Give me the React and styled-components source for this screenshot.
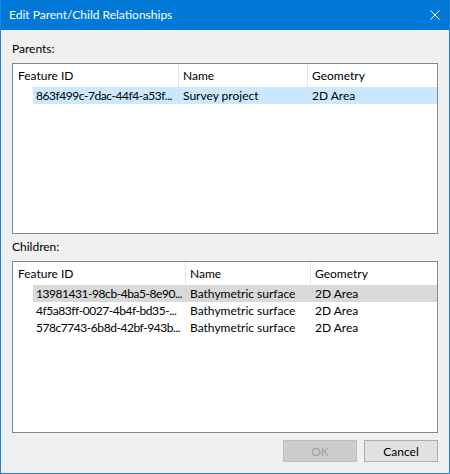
import React from 'react';
import styled, { createGlobalStyle } from 'styled-components';

const GlobalStyle = createGlobalStyle`
  body {
    margin: 0;
    font-family: 'Segoe UI', Lato, 'Noto Sans', sans-serif;
    font-size: 12px;
    color: #000;
  }
`;

const Window = styled.div`
  display: flex;
  flex-direction: column;
  width: 450px;
  height: 474px;
  box-sizing: border-box;
  border: 1px solid #1883d7;
  border-top: 0;
  background: #f0f0f0;
`;

const TitleBar = styled.div`
  display: flex;
  align-items: center;
  justify-content: space-between;
  height: 30px;
  padding-left: 8px;
  background: #0078d7;
  color: #fff;
  line-height: 16px;
`;

const CloseIcon = styled.svg`
  margin-right: 9px;
`;

const Body = styled.div`
  display: flex;
  flex-direction: column;
  padding: 11px;
`;

const Label = styled.div`
  line-height: 16px;
  margin: ${(props) => props.margin || '0'};
`;

const ListBox = styled.div`
  height: ${(props) => props.height}px;
  box-sizing: border-box;
  border: 1px solid #828790;
  background: #fff;
  overflow: hidden;
`;

const Header = styled.div`
  display: grid;
  grid-template-columns: ${(props) => props.cols};
  height: 23px;
  line-height: 23px;
`;

const HeaderCell = styled.div`
  padding-left: 4px;
  white-space: nowrap;
  overflow: hidden;
  border-right: 1px solid #e5e5e5;
  &:first-child {
    padding-left: 5px;
  }
  &:last-child {
    border-right: 0;
  }
`;

const Row = styled.div`
  display: grid;
  grid-template-columns: ${(props) => props.cols};
  margin-left: 20px;
  height: 17px;
  line-height: 17px;
  background: ${(props) =>
    props.selected === 'active' ? '#cce8ff' : props.selected === 'inactive' ? '#d9d9d9' : 'transparent'};
`;

const Cell = styled.div`
  padding-left: 4px;
  white-space: nowrap;
  overflow: hidden;
  text-overflow: clip;
`;

// feature IDs: Lato digits run wider than the dialog font, so tighten them a bit
const IdCell = styled(Cell)`
  padding-left: 3px;
  letter-spacing: -0.45px;
`;

const ButtonRow = styled.div`
  display: flex;
  justify-content: flex-end;
  gap: 7px;
  margin-top: 7px;
`;

const Button = styled.button`
  width: 74px;
  height: 22px;
  box-sizing: border-box;
  padding: 0;
  font-family: inherit;
  font-size: 12px;
  border: 1px solid ${(props) => (props.disabled ? '#bfbfbf' : '#adadad')};
  background: ${(props) => (props.disabled ? '#cccccc' : '#e1e1e1')};
  color: ${(props) => (props.disabled ? '#a0a0a0' : '#000')};
`;

const columns = ['Feature ID', 'Name', 'Geometry'];

const parents = [['863f499c-7dac-44f4-a53f...', 'Survey project', '2D Area']];

const children = [
  ['13981431-98cb-4ba5-8e90...', 'Bathymetric surface', '2D Area'],
  ['4f5a83ff-0027-4b4f-bd35-...', 'Bathymetric surface', '2D Area'],
  ['578c7743-6b8d-42bf-943b...', 'Bathymetric surface', '2D Area'],
];

const FeatureList = ({ height, headerCols, rowCols, rows, selected }) => (
  <ListBox height={height}>
    <Header cols={headerCols}>
      {columns.map((c) => (
        <HeaderCell key={c}>{c}</HeaderCell>
      ))}
    </Header>
    {rows.map(([id, name, geometry], i) => (
      <Row key={id} cols={rowCols} selected={i === 0 ? selected : null}>
        <IdCell>{id}</IdCell>
        <Cell>{name}</Cell>
        <Cell>{geometry}</Cell>
      </Row>
    ))}
  </ListBox>
);

const App = () => (
  <>
    <GlobalStyle />
    <Window>
      <TitleBar>
        <span>Edit Parent/Child Relationships</span>
        <CloseIcon width='10' height='10' viewBox='0 0 10 10'>
          <path d='M0.5 0.5 L9.5 9.5 M9.5 0.5 L0.5 9.5' stroke='#fff' strokeWidth='1' />
        </CloseIcon>
      </TitleBar>
      <Body>
        <Label margin='0 0 6px'>Parents:</Label>
        <FeatureList
          height={171}
          headerCols='166px 129px 1fr'
          rowCols='146px 129px 1fr'
          rows={parents}
          selected='active'
        />
        <Label margin='5px 0 6px'>Children:</Label>
        <FeatureList
          height={172}
          headerCols='173px 125px 1fr'
          rowCols='153px 125px 1fr'
          rows={children}
          selected='inactive'
        />
        <ButtonRow>
          <Button disabled>OK</Button>
          <Button>Cancel</Button>
        </ButtonRow>
      </Body>
    </Window>
  </>
);

export default App;
